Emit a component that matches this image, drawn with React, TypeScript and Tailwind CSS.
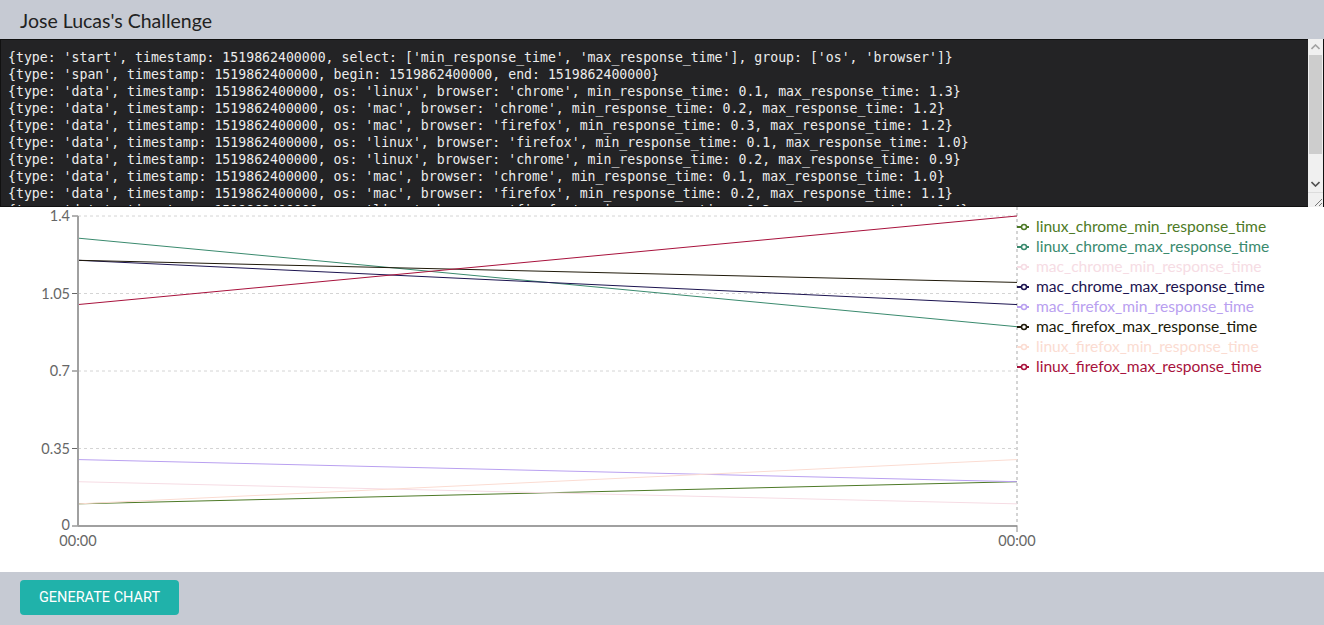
import { useState } from "react"

const events = [
  "{type: 'start', timestamp: 1519862400000, select: ['min_response_time', 'max_response_time'], group: ['os', 'browser']}",
  "{type: 'span', timestamp: 1519862400000, begin: 1519862400000, end: 1519862400000}",
  "{type: 'data', timestamp: 1519862400000, os: 'linux', browser: 'chrome', min_response_time: 0.1, max_response_time: 1.3}",
  "{type: 'data', timestamp: 1519862400000, os: 'mac', browser: 'chrome', min_response_time: 0.2, max_response_time: 1.2}",
  "{type: 'data', timestamp: 1519862400000, os: 'mac', browser: 'firefox', min_response_time: 0.3, max_response_time: 1.2}",
  "{type: 'data', timestamp: 1519862400000, os: 'linux', browser: 'firefox', min_response_time: 0.1, max_response_time: 1.0}",
  "{type: 'data', timestamp: 1519862400000, os: 'linux', browser: 'chrome', min_response_time: 0.2, max_response_time: 0.9}",
  "{type: 'data', timestamp: 1519862400000, os: 'mac', browser: 'chrome', min_response_time: 0.1, max_response_time: 1.0}",
  "{type: 'data', timestamp: 1519862400000, os: 'mac', browser: 'firefox', min_response_time: 0.2, max_response_time: 1.1}",
  "{type: 'data', timestamp: 1519862400000, os: 'linux', browser: 'firefox', min_response_time: 0.3, max_response_time: 1.4}",
  "{type: 'stop', timestamp: 1519862400000}",
  "",
]

const series = [
  { name: "linux_chrome_min_response_time", color: "#4e7a27", from: 0.1, to: 0.2 },
  { name: "linux_chrome_max_response_time", color: "#3a8a6e", from: 1.3, to: 0.9 },
  { name: "mac_chrome_min_response_time", color: "#f6dce4", from: 0.2, to: 0.1 },
  { name: "mac_chrome_max_response_time", color: "#1c1450", from: 1.2, to: 1.0 },
  { name: "mac_firefox_min_response_time", color: "#b9a0f0", from: 0.3, to: 0.2 },
  { name: "mac_firefox_max_response_time", color: "#201a0a", from: 1.2, to: 1.1 },
  { name: "linux_firefox_min_response_time", color: "#fbdcd2", from: 0.1, to: 0.3 },
  { name: "linux_firefox_max_response_time", color: "#a8123c", from: 1.0, to: 1.4 },
]

// chart geometry, in svg coords (svg top = page y 207)
const X0 = 78
const X1 = 1017
const Y0 = 319 // value 0
const YTOP = 9 // value 1.4
const yOf = (v: number) => Y0 - ((Y0 - YTOP) * v) / 1.4

const ticks = [
  { v: 0, label: "0" },
  { v: 0.35, label: "0.35" },
  { v: 0.7, label: "0.7" },
  { v: 1.05, label: "1.05" },
  { v: 1.4, label: "1.4" },
]

function Chart() {
  return (
    <svg width={1324} height={365} className="block" style={{ fontFamily: "Lato, 'Noto Sans', sans-serif" }}>
      {ticks.map((t) => (
        <g key={t.label}>
          {t.v > 0 && (
            <line x1={X0} x2={X1} y1={yOf(t.v)} y2={yOf(t.v)} stroke="#d4d4d4" strokeDasharray="3 3" />
          )}
          <line x1={X0 - 6} x2={X0} y1={yOf(t.v)} y2={yOf(t.v)} stroke="#666" />
          <text x={X0 - 8} y={yOf(t.v) + (t.v === 0 ? 4 : 5)} textAnchor="end" fontSize={14.5} fill="#666">
            {t.label}
          </text>
        </g>
      ))}
      <line x1={X1} x2={X1} y1={0} y2={Y0} stroke="#d4d4d4" strokeWidth={2} strokeDasharray="3 3" />

      {series.map((s) => (
        <line key={s.name} x1={X0} x2={X1} y1={yOf(s.from)} y2={yOf(s.to)} stroke={s.color} strokeWidth={1} />
      ))}

      <line x1={X0} x2={X0} y1={YTOP} y2={Y0} stroke="#a0a0a0" strokeWidth={2} />
      <line x1={X0} x2={X1} y1={Y0} y2={Y0} stroke="#a0a0a0" strokeWidth={2} />
      <line x1={X1} x2={X1} y1={Y0} y2={Y0 + 6} stroke="#888" />
      <text x={X0} y={Y0 + 20} textAnchor="middle" fontSize={14.5} fill="#666">00:00</text>
      <text x={X1} y={Y0 + 20} textAnchor="middle" fontSize={14.5} fill="#666">00:00</text>

      {series.map((s, i) => {
        const y = 20 + i * 20
        return (
          <g key={s.name + "-legend"}>
            <line x1={X1} x2={X1 + 12} y1={y} y2={y} stroke={s.color} strokeWidth={2} />
            <circle cx={X1 + 7} cy={y} r={2.5} fill="#fff" stroke={s.color} strokeWidth={1.5} />
            <text x={1036} y={y + 5} fontSize={15.6} fill={s.color}>
              {s.name}
            </text>
          </g>
        )
      })}
    </svg>
  )
}

// drawn stand-in for the textarea's native scrollbar + resize grip
function FakeScrollbar() {
  return (
    <div className="absolute right-[1px] top-0 bottom-0 w-[15px] flex flex-col bg-[#f0f0f0] pointer-events-none">
      <div className="h-[16px] flex items-center justify-center">
        <svg width="9" height="6" viewBox="0 0 9 6">
          <path d="M0.5 5 L4.5 1 L8.5 5" fill="none" stroke="#a3a3a3" strokeWidth="1.6" />
        </svg>
      </div>
      <div className="h-[99px] mx-[1px] bg-[#cdcdcd]" />
      <div className="flex-1" />
      <div className="h-[16px] flex items-center justify-center">
        <svg width="9" height="6" viewBox="0 0 9 6">
          <path d="M0.5 1 L4.5 5 L8.5 1" fill="none" stroke="#505050" strokeWidth="1.6" />
        </svg>
      </div>
      <div className="h-[15px] border-t border-[#dcdcdc] bg-[#f0f0f0] flex items-end justify-end">
        <svg width="12" height="12" viewBox="0 0 12 12">
          <path d="M11 4 L4 11 M11 8 L8 11" stroke="#777" strokeWidth="1" />
        </svg>
      </div>
    </div>
  )
}

export default function App() {
  const [input, setInput] = useState(events.join("\n"))

  return (
    <div className="w-[1324px] h-[625px] flex flex-col bg-[#c6cad3] overflow-hidden">
      <header className="h-[39px] flex items-center px-5">
        <h1 className="text-[19.5px] text-[#222] font-['Lato','Noto_Sans',sans-serif] pt-[2px]">Jose Lucas's Challenge</h1>
      </header>
      <div className="relative h-[168px]">
        <textarea
          value={input}
          onChange={(e) => setInput(e.target.value)}
          spellCheck={false}
          className="block w-full h-full bg-[#232325] text-[#ececec] border border-[#111] pl-[7px] pr-5 pt-[9px] text-[13.2px] leading-[17px] whitespace-pre font-['DejaVu_Sans_Mono',monospace] overflow-hidden resize-none outline-none"
        />
        <FakeScrollbar />
      </div>
      <div className="bg-white h-[365px]">
        <Chart />
      </div>
      <div className="flex-1 px-5 pt-2">
        <button className="w-[159px] h-[35px] rounded bg-[#20b2aa] text-white text-[14.5px] uppercase font-['Roboto',sans-serif] pt-[1px]">
          Generate Chart
        </button>
      </div>
    </div>
  )
}
